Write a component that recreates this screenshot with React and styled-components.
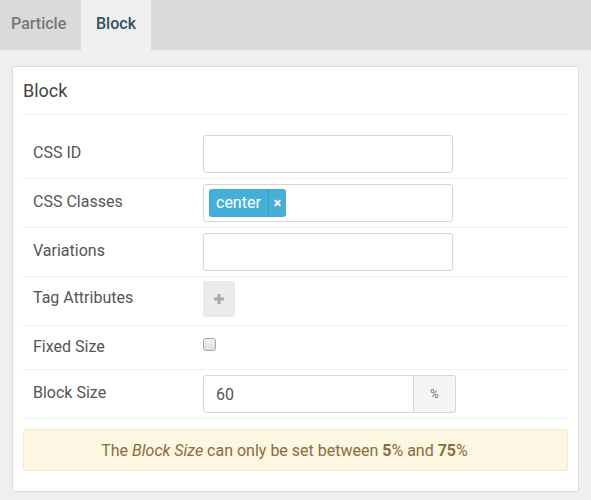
import React from "react";
import styled, { createGlobalStyle } from "styled-components";

const Global = createGlobalStyle`
  html, body { margin: 0; padding: 0; background: #efefef; }
  body { font-family: Roboto, "Liberation Sans", Arial, sans-serif; }
  * { box-sizing: border-box; }
`;

const Page = styled.div`
  width: 591px;
  height: 500px;
  background: #efefef;
  overflow: hidden;
`;

const TabBar = styled.div`
  display: flex;
  height: 50px;
  background: #dadada;
`;

const Tab = styled.div`
  display: flex;
  align-items: center;
  padding: 0 ${(p) => (p.$active ? "15px" : "11px")} 3px;
  width: ${(p) => p.$w}px;
  justify-content: ${(p) => (p.$active ? "center" : "flex-start")};
  background: ${(p) => (p.$active ? "#efefef" : "transparent")};
  color: ${(p) => (p.$active ? "#2f4f5f" : "#777")};
  font-size: 16px;
  font-weight: 500;
`;

const Content = styled.div`
  padding: 16px 12px 0;
`;

const Card = styled.div`
  background: #fff;
  border: 1px solid #ddd;
  border-radius: 3px;
  padding: 10px 10px 20px;
`;

const CardTitle = styled.h3`
  margin: 0;
  font-size: 18px;
  font-weight: 400;
  color: #444;
  line-height: 28px;
  padding-bottom: 9px;
  border-bottom: 1px solid #eee;
`;

const Rows = styled.div`
  margin-top: 15px;
`;

const Row = styled.div`
  display: flex;
  align-items: center;
  padding: ${(p) => p.$pad || "5px 10px"};
  min-height: ${(p) => p.$h || 0}px;
  border-bottom: 1px solid #eee;
`;

const Label = styled.div`
  width: 170px;
  flex: none;
  font-size: 16px;
  color: #555;
  align-self: center;
  padding-bottom: 3px;
`;

const TextInput = styled.input`
  width: 250px;
  height: 38px;
  border: 1px solid #d6d6d6;
  border-radius: 3px;
  padding: 0 12px;
  font-family: inherit;
  font-size: 16px;
  color: #555;
  outline: none;
  background: #fff;
`;

const TagBox = styled.div`
  width: 250px;
  height: 38px;
  border: 1px solid #d6d6d6;
  border-radius: 3px;
  padding: 4px 5px;
  display: flex;
  align-items: center;
`;

const Chip = styled.div`
  display: flex;
  align-items: stretch;
  height: 28px;
  background: #45afd8;
  border-radius: 3px;
  color: #fff;
  font-size: 16px;
`;

const ChipText = styled.span`
  display: flex;
  align-items: center;
  padding: 0 7px 1px 7px;
`;

const ChipRemove = styled.span`
  display: flex;
  align-items: center;
  justify-content: center;
  width: 18px;
  border-left: 1px solid #3c9cc2;
  font-size: 14px;
  font-weight: 700;
`;

const AddButton = styled.button`
  width: 32px;
  height: 36px;
  border: none;
  border-radius: 2px;
  background: #ebebeb;
  display: flex;
  align-items: center;
  justify-content: center;
  padding: 0;
  cursor: pointer;
`;

const Check = styled.input`
  appearance: none;
  -webkit-appearance: none;
  margin: 7px 0 0 0;
  width: 13px;
  height: 13px;
  align-self: flex-start;
  border: 1px solid #a6a6a6;
  border-radius: 3px;
  background: linear-gradient(#f4f4f4, #dedede);
`;

const InputGroup = styled.div`
  display: flex;
  height: 38px;
`;

const GroupInput = styled(TextInput)`
  width: 211px;
  border-radius: 3px 0 0 3px;
`;

const Addon = styled.div`
  width: 42px;
  display: flex;
  align-items: center;
  justify-content: center;
  background: #f5f5f5;
  border: 1px solid #d6d6d6;
  border-left: none;
  border-radius: 0 3px 3px 0;
  color: #777;
  font-size: 12px;
  padding-bottom: 1px;
`;

const Alert = styled.div`
  margin-top: 10px;
  background: #fcf6e3;
  border: 1px solid #f7e9c0;
  border-radius: 3px;
  height: 42px;
  display: flex;
  align-items: center;
  justify-content: center;
  color: #8a6d3b;
  font-size: 16px;
  padding-right: 22px;
  em { margin: 0 4px; }
  b { font-weight: 700; }
`;

const Plus = () => (
  <svg width="10" height="10" viewBox="0 0 10 10">
    <path d="M3.5 0h3v3.5H10v3H6.5V10h-3V6.5H0v-3h3.5z" fill="#aaa" />
  </svg>
);

export default function App() {
  return (
    <Page>
      <Global />
      <TabBar>
        <Tab $w={81}>Particle</Tab>
        <Tab $w={70} $active>Block</Tab>
      </TabBar>
      <Content>
        <Card>
          <CardTitle>Block</CardTitle>
          <Rows>
            <Row>
              <Label>CSS ID</Label>
              <TextInput defaultValue="" />
            </Row>
            <Row>
              <Label>CSS Classes</Label>
              <TagBox>
                <Chip>
                  <ChipText>center</ChipText>
                  <ChipRemove>×</ChipRemove>
                </Chip>
              </TagBox>
            </Row>
            <Row>
              <Label>Variations</Label>
              <TextInput defaultValue="" />
            </Row>
            <Row $pad="4px 10px 8px">
              <Label>Tag Attributes</Label>
              <AddButton>
                <Plus />
              </AddButton>
            </Row>
            <Row $h={44}>
              <Label>Fixed Size</Label>
              <Check type="checkbox" />
            </Row>
            <Row>
              <Label>Block Size</Label>
              <InputGroup>
                <GroupInput defaultValue="60" />
                <Addon>%</Addon>
              </InputGroup>
            </Row>
          </Rows>
          <Alert>
            The<em>Block Size</em>can only be set between&nbsp;<b>5</b>% and&nbsp;<b>75</b>%
          </Alert>
        </Card>
      </Content>
    </Page>
  );
}
